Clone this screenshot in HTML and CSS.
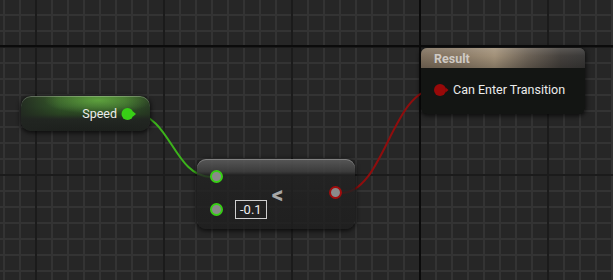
FILE: index.html
```html
<!DOCTYPE html>
<html lang="en">
<head>
  <meta charset="UTF-8" />
  <title>Transition Rule</title>
  <link rel="stylesheet" href="styles.css">
</head>
<body>
  <div class="graph">
    <svg class="wires" width="613" height="280" viewBox="0 0 613 280">
      <path class="wire wire-float" d="M133,113.5 C170,113.5 174,177 211,177" />
      <path class="wire wire-bool" d="M341,193 C384,193 392,89 436,89" />
    </svg>

    <div class="node getter">
      <span class="label">Speed</span>
      <svg class="pin-out" width="16" height="14" viewBox="0 0 16 14">
        <circle cx="6.5" cy="7" r="6" fill="#38cf16" />
        <path d="M12 4.5 L15 7 L12 9.5 Z" fill="#38cf16" />
      </svg>
    </div>

    <div class="node compare">
      <div class="inputs">
        <div class="pin-row"><span class="pin ring green"></span></div>
        <div class="pin-row"><span class="pin ring green"></span><span class="value">-0.1</span></div>
      </div>
      <div class="op">&lt;</div>
      <div class="outputs"><span class="pin ring red"></span></div>
    </div>

    <div class="node result">
      <div class="result-head">Result</div>
      <div class="result-body">
        <div class="pin-row">
          <svg class="pin-in" width="16" height="14" viewBox="0 0 16 14">
            <circle cx="7" cy="7" r="6" fill="#980909" />
            <path d="M12.5 4.5 L15.5 7 L12.5 9.5 Z" fill="#980909" />
          </svg>
          <span class="label">Can Enter Transition</span>
        </div>
      </div>
    </div>
  </div>
</body>
</html>
```

FILE: styles.css
```css
:root {
  --bg: #262626;
  --grid: #333333;
  --grid-major: #1b1b1b;
  --origin: #0b0b0b;
  --float: #38cf16;
  --bool: #8f0d0d;
  --text: #ececec;
}

body {
  margin: 0;
  padding: 0;
  font-family: Roboto, "Liberation Sans", sans-serif;
  color: var(--text);
}

.graph {
  position: relative;
  width: 613px;
  height: 280px;
  overflow: hidden;
  background-color: var(--bg);
  background-image:
    linear-gradient(var(--origin), var(--origin)),
    linear-gradient(var(--origin), var(--origin)),
    linear-gradient(to right, var(--grid-major) 2px, transparent 2px),
    linear-gradient(to bottom, var(--grid-major) 2px, transparent 2px),
    linear-gradient(to right, var(--grid) 2px, transparent 2px),
    linear-gradient(to bottom, var(--grid) 2px, transparent 2px);
  background-size: 2px 100%, 100% 2px, 128px 100%, 100% 128px, 16px 100%, 100% 16px;
  background-position: 419px 0, 0 45px, 35px 0, 0 46px, 3px 0, 0 14px;
  background-repeat: no-repeat, no-repeat, repeat-x, repeat-y, repeat-x, repeat-y;
}

.wires {
  position: absolute;
  left: 0;
  top: 0;
}

.wire {
  fill: none;
  stroke-width: 2;
}

.wire-float {
  stroke: #3cb31b;
}

.wire-bool {
  stroke: var(--bool);
}

.node {
  position: absolute;
  box-sizing: border-box;
  box-shadow: 0 1px 4px 1px rgba(0, 0, 0, 0.65), inset 0 1px 0 rgba(255, 255, 255, 0.25);
}

/* variable getter */
.getter {
  left: 21px;
  top: 96px;
  width: 129px;
  height: 35px;
  border-radius: 10px;
  display: flex;
  align-items: center;
  justify-content: flex-end;
  padding-right: 13px;
  gap: 4px;
  background:
    radial-gradient(ellipse 42% 40% at 60% 12%, rgba(110, 190, 70, 0.7), transparent 100%),
    linear-gradient(to right, rgba(32, 36, 32, 0.85) 0%, rgba(32, 36, 32, 0.2) 30%, rgba(32, 36, 32, 0.15) 80%, rgba(32, 36, 32, 0.6) 100%),
    linear-gradient(to bottom, #3e6a2c 0%, #35602a 30%, #2b4a22 52%, #222722 66%, #1c1f1c 100%);
}

.getter .label {
  font-size: 12.5px;
  margin-top: -1px;
}

.pin-out,
.pin-in {
  display: block;
}

/* compare node */
.compare {
  left: 197px;
  top: 159px;
  width: 158px;
  height: 70px;
  border-radius: 9px;
  display: flex;
  align-items: flex-start;
  padding: 11px 0 0 13px;
  background:
    linear-gradient(to bottom, rgba(92, 92, 92, 0.9) 0%, rgba(62, 62, 62, 0.88) 18%, rgba(34, 34, 34, 0.82) 23%, rgba(30, 30, 30, 0.8) 100%);
}

.inputs {
  display: flex;
  flex-direction: column;
  gap: 17px;
}

.pin-row {
  display: flex;
  align-items: center;
  gap: 12px;
}

.pin {
  display: block;
  width: 9px;
  height: 9px;
  border-radius: 50%;
  background-color: #8a8a8a;
}

.pin.green {
  border: 2px solid var(--float);
}

.pin.red {
  border: 2px solid #a10c0c;
}

.value {
  box-sizing: border-box;
  height: 19px;
  padding: 0 4px;
  border: 1px solid #cfcfcf;
  font-size: 13px;
  line-height: 17px;
}

.op {
  margin: 15px 0 0 5px;
  font-size: 23px;
  font-weight: bold;
  color: #a8a8a8;
  line-height: 22px;
}

.outputs {
  margin: 16px 13px 0 auto;
}

/* result node */
.result {
  left: 421px;
  top: 48px;
  width: 164px;
  height: 66px;
  border-radius: 6px;
  overflow: hidden;
  background-color: #131513;
}

.result-head {
  height: 20px;
  padding-left: 13px;
  font-size: 12.5px;
  font-weight: bold;
  line-height: 22px;
  color: #cfcac4;
  background:
    linear-gradient(to bottom, rgba(255, 255, 255, 0.12) 0%, rgba(0, 0, 0, 0) 40%, rgba(0, 0, 0, 0.2) 100%),
    linear-gradient(to right, #7f705e 0%, #8c7c68 25%, #a29179 45%, #6d6357 65%, #45413d 85%, #3a3938 100%);
}

.result-body {
  padding: 14px 0 0 12px;
}

.result-body .pin-row {
  gap: 4px;
}

.result-body .label {
  font-size: 12.5px;
}
```
